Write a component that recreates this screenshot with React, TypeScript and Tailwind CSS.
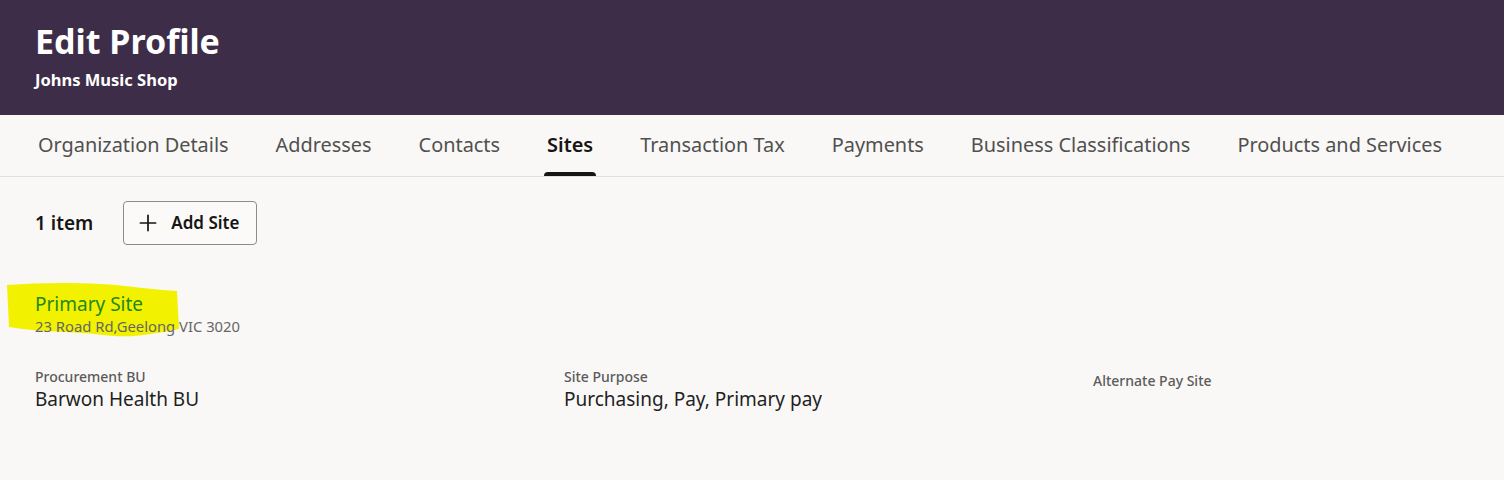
import { Plus } from "lucide-react";

const tabs = [
  "Organization Details",
  "Addresses",
  "Contacts",
  "Sites",
  "Transaction Tax",
  "Payments",
  "Business Classifications",
  "Products and Services",
];

function Field({ label, value, offset }: { label: string; value?: string; offset?: boolean }) {
  return (
    <div className={offset ? "pt-[4px]" : ""}>
      <div className="text-[14px] leading-[18px] font-medium text-[#5b5b5b]">{label}</div>
      {value && <div className="text-[19px] leading-[26px] text-[#1f1f1f]">{value}</div>}
    </div>
  );
}

export default function App() {
  return (
    <div className="h-[480px] w-[1504px] overflow-hidden bg-[#f9f8f6] font-['Noto_Sans',sans-serif]">
      <header className="h-[115px] bg-[#3e2d48] px-[35px] pt-[20px] text-white">
        <h1 className="text-[34px] leading-[42px] font-bold">Edit Profile</h1>
        <div className="mt-[8px] text-[16.5px] leading-[20px] font-bold">Johns Music Shop</div>
      </header>

      <nav className="flex h-[62px] gap-[47px] border-b border-[#e2e0dd] pl-[38px]">
        {tabs.map((t) => {
          const active = t === "Sites";
          return (
            <div key={t} className="relative flex items-center pb-[2px]">
              <span
                className={
                  active
                    ? "text-[19.9px] font-semibold text-[#161513]"
                    : "text-[19.9px] text-[#505050]"
                }
              >
                {t}
              </span>
              {active && (
                <span className="absolute -left-[3px] -right-[3px] bottom-0 h-[4px] rounded-t-[4px] bg-[#161513]" />
              )}
            </div>
          );
        })}
      </nav>

      <section className="px-[35px]">
        <div className="flex items-center gap-[30px] pt-[24px]">
          <span className="text-[19px] font-semibold text-[#161513]">1 item</span>
          <button className="flex h-[44px] items-center gap-[10px] rounded-[4px] border border-[#8f8c88] bg-[#fbfaf9] pl-[11px] pr-[17px] text-[17px] font-semibold text-[#161513]">
            <Plus size={26} strokeWidth={1.6} />
            Add Site
          </button>
        </div>

        <div className="relative mt-[47px] w-fit">
          <svg
            className="absolute -left-[30px] -top-[11px]"
            width="178"
            height="60"
            viewBox="0 0 178 60"
          >
            <path
              d="M2 4 C30 2 60 1 95 3 C120 4 140 8 172 10 L174 48 C150 52 130 58 98 54 C70 50 40 52 4 46 Z"
              fill="#f2f200"
            />
          </svg>
          <div className="relative text-[19px] leading-[24px] text-[#22881a]">Primary Site</div>
          <div className="relative text-[14.8px] leading-[20px] text-[#666]">23 Road Rd,Geelong VIC 3020</div>
        </div>

        <div className="mt-[32px] grid grid-cols-[529px_529px_1fr]">
          <Field label="Procurement BU" value="Barwon Health BU" />
          <Field label="Site Purpose" value="Purchasing, Pay, Primary pay" />
          <Field label="Alternate Pay Site" offset />
        </div>
      </section>
    </div>
  );
}
